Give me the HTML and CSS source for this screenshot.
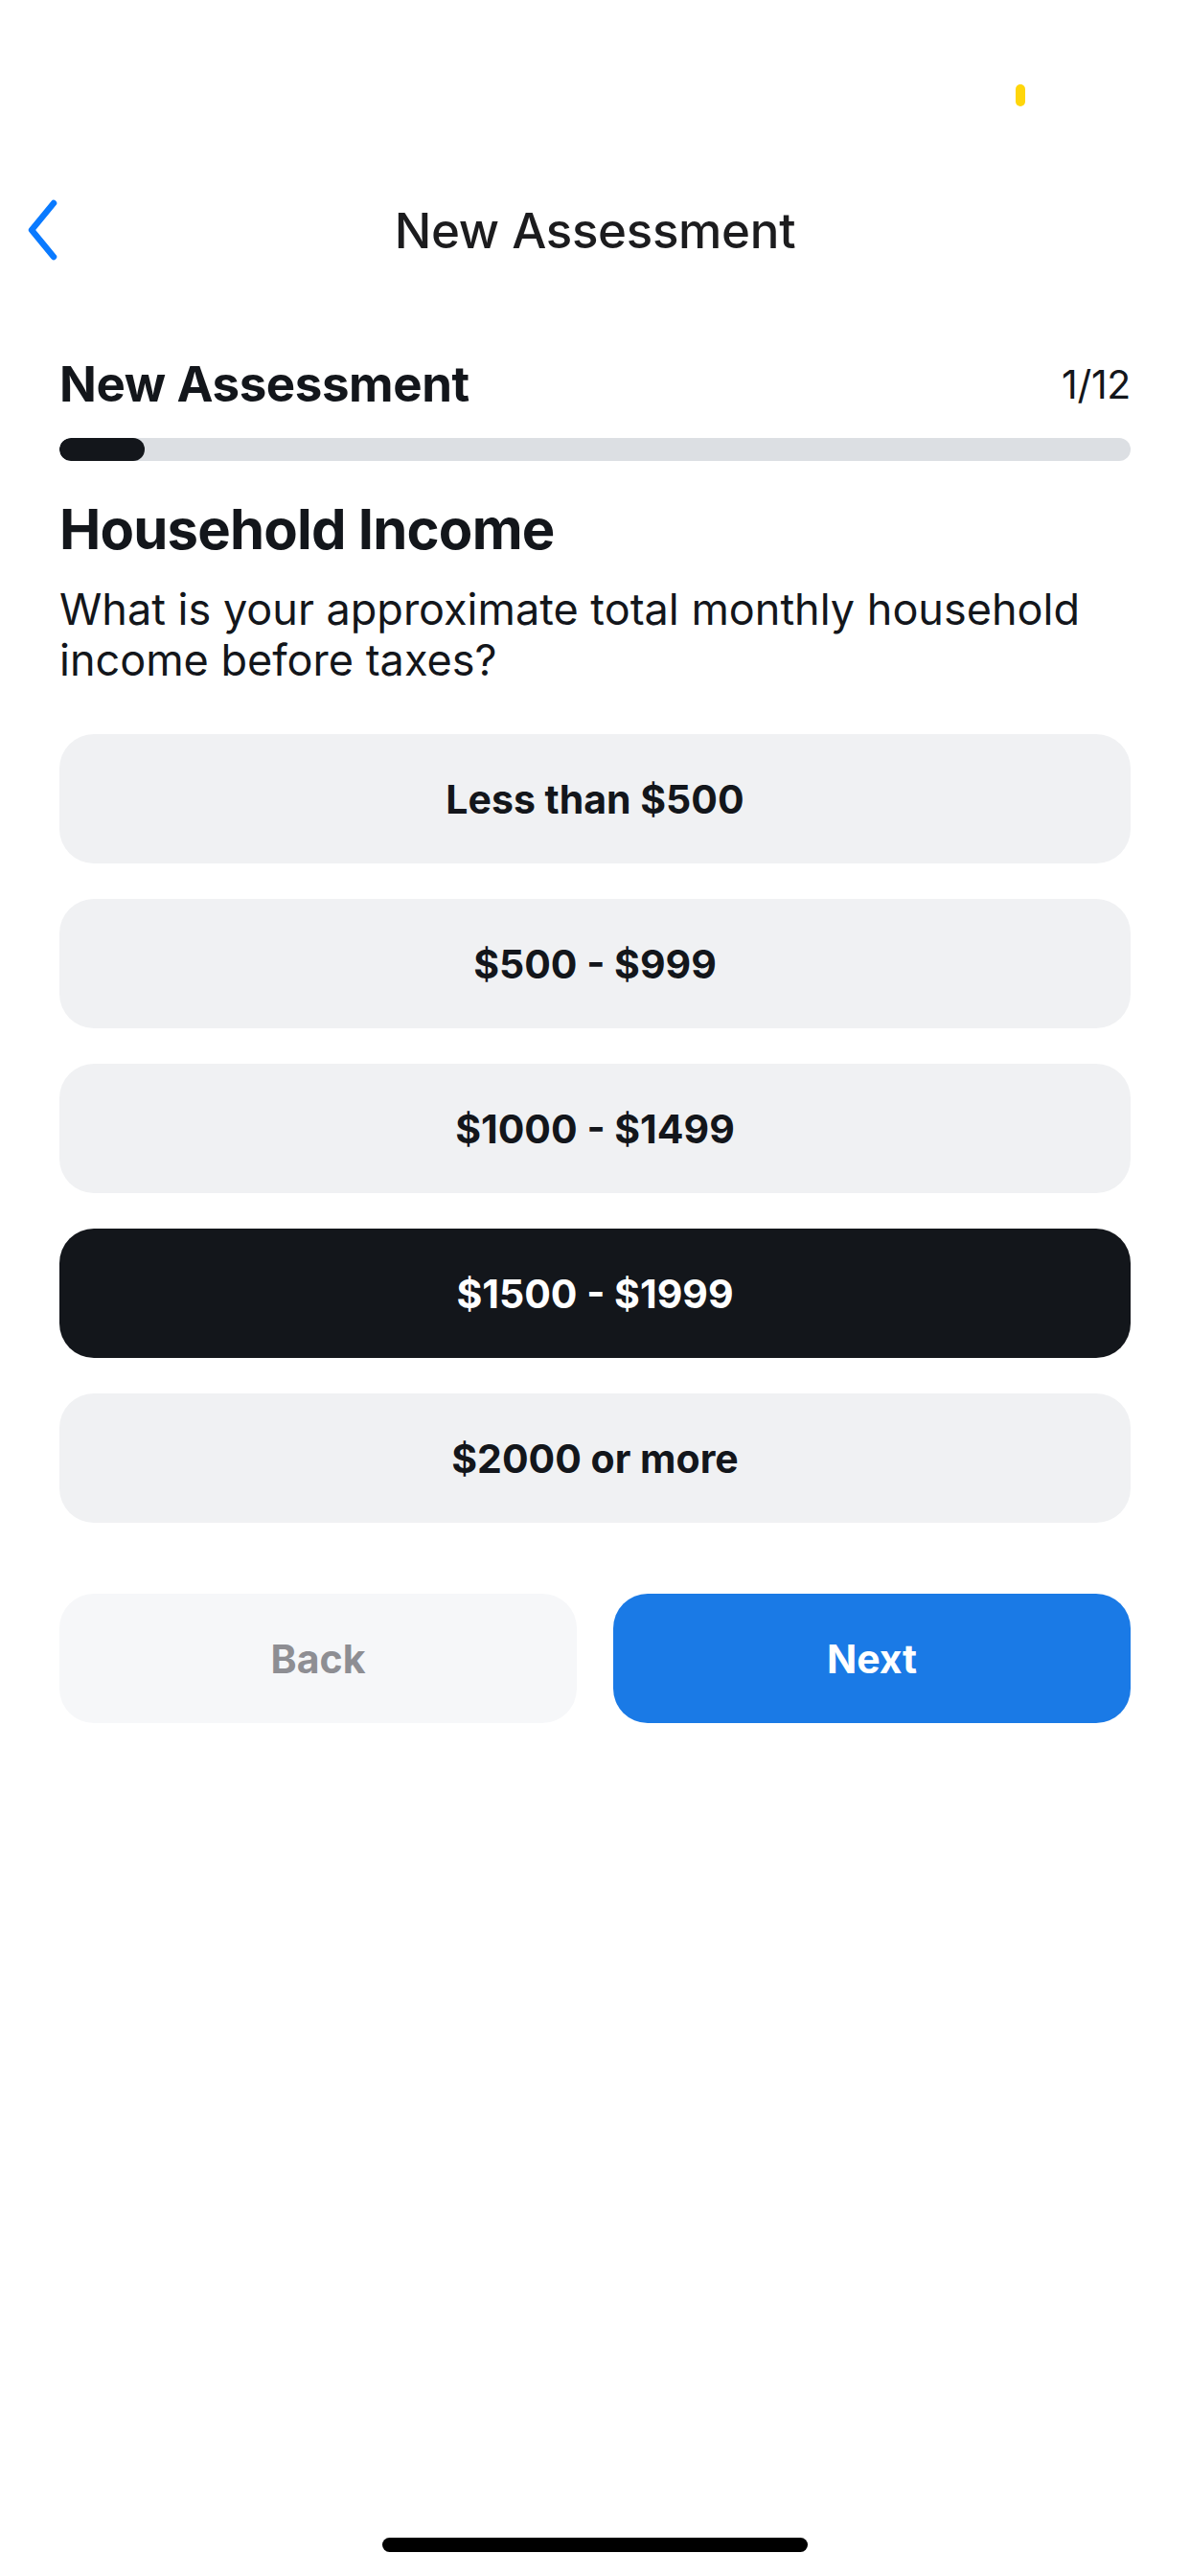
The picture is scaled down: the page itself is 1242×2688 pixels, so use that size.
FILE: index.html
```html
<!DOCTYPE html>
<html lang="en">
<head>
<meta charset="utf-8">
<title>New Assessment</title>
<link rel="stylesheet" href="styles.css">
</head>
<body>
<div class="screen">
  <div class="status-bar">
    <span class="privacy-dot"></span>
  </div>
  <header class="nav-bar">
    <div class="nav-left">
      <svg class="back-chevron" width="40" height="64" viewBox="0 0 40 64" aria-hidden="true">
        <polyline points="32,4 9,32 32,60" fill="none" stroke="#0A7AFF" stroke-width="6.5" stroke-linecap="round" stroke-linejoin="round"/>
      </svg>
    </div>
    <div class="nav-title">New Assessment</div>
    <div class="nav-right"></div>
  </header>

  <main class="content">
    <div class="title-row">
      <h1 class="flow-title">New Assessment</h1>
      <span class="step-count">1/12</span>
    </div>
    <div class="progress-track"><div class="progress-fill" style="width: 8%"></div></div>

    <h2 class="question-title">Household Income</h2>
    <p class="question-text">What is your approximate total monthly household income before taxes?</p>

    <div class="options">
      <button class="option">Less than $500</button>
      <button class="option">$500 - $999</button>
      <button class="option">$1000 - $1499</button>
      <button class="option option-selected">$1500 - $1999</button>
      <button class="option">$2000 or more</button>
    </div>

    <div class="actions">
      <button class="btn btn-back">Back</button>
      <button class="btn btn-next">Next</button>
    </div>
  </main>

  <div class="home-indicator"></div>
</div>
</body>
</html>
```

FILE: styles.css
```css
* { box-sizing: border-box; }

html, body {
  margin: 0;
  padding: 0;
  background: #ffffff;
}

body {
  font-family: Inter, "Noto Sans", "Liberation Sans", sans-serif;
  color: #13161b;
}

.screen {
  position: relative;
  width: 1242px;
  height: 2688px;
  background: #ffffff;
}

.status-bar {
  position: relative;
  height: 180px;
}

.privacy-dot {
  position: absolute;
  left: 1060px;
  top: 88px;
  width: 10px;
  height: 23px;
  border-radius: 5px;
  background: #FFD60A;
}

.nav-bar {
  height: 120px;
  display: grid;
  grid-template-columns: 1fr auto 1fr;
  align-items: center;
}

.nav-left {
  display: flex;
  align-items: center;
  padding-left: 24px;
}

.back-chevron { display: block; }

.nav-title {
  font-size: 51px;
  font-weight: 500;
  letter-spacing: -0.3px;
  color: #1c1c1e;
}

.content {
  padding: 0 62px;
}

.title-row {
  margin-top: 71px;
  height: 60px;
  display: flex;
  justify-content: space-between;
  align-items: center;
}

.flow-title {
  margin: 0;
  font-size: 51px;
  font-weight: 700;
  letter-spacing: -0.4px;
  line-height: 60px;
}

.step-count {
  font-size: 41px;
  font-weight: 400;
  letter-spacing: -0.3px;
}

.progress-track {
  margin-top: 26px;
  height: 24px;
  border-radius: 12px;
  background: #dcdfe3;
  overflow: hidden;
}

.progress-fill {
  height: 100%;
  border-radius: 12px;
  background: #13161b;
}

.question-title {
  margin: 35px 0 0;
  font-size: 58px;
  font-weight: 700;
  letter-spacing: -0.8px;
  line-height: 72px;
}

.question-text {
  margin: 21px 0 0;
  font-size: 45px;
  font-weight: 400;
  letter-spacing: 0;
  line-height: 53px;
}

.options {
  margin-top: 51px;
  display: flex;
  flex-direction: column;
  gap: 37px;
}

.option {
  height: 135px;
  border: none;
  border-radius: 36px;
  background: #f0f1f3;
  font-family: inherit;
  font-size: 41px;
  font-weight: 700;
  letter-spacing: 0;
  color: #13161b;
  padding: 0;
}

.option-selected {
  background: #13161b;
  color: #ffffff;
}

.actions {
  margin-top: 74px;
  display: grid;
  grid-template-columns: 1fr 1fr;
  gap: 38px;
}

.btn {
  height: 135px;
  border: none;
  border-radius: 36px;
  font-family: inherit;
  font-size: 41px;
  font-weight: 700;
  letter-spacing: 0;
  padding: 0;
}

.btn-back {
  background: #f6f7f9;
  color: #8e8e93;
}

.btn-next {
  background: #1a7ae6;
  color: #ffffff;
}

.home-indicator {
  position: absolute;
  left: 399px;
  top: 2648px;
  width: 444px;
  height: 15px;
  border-radius: 8px;
  background: #000000;
}
```
